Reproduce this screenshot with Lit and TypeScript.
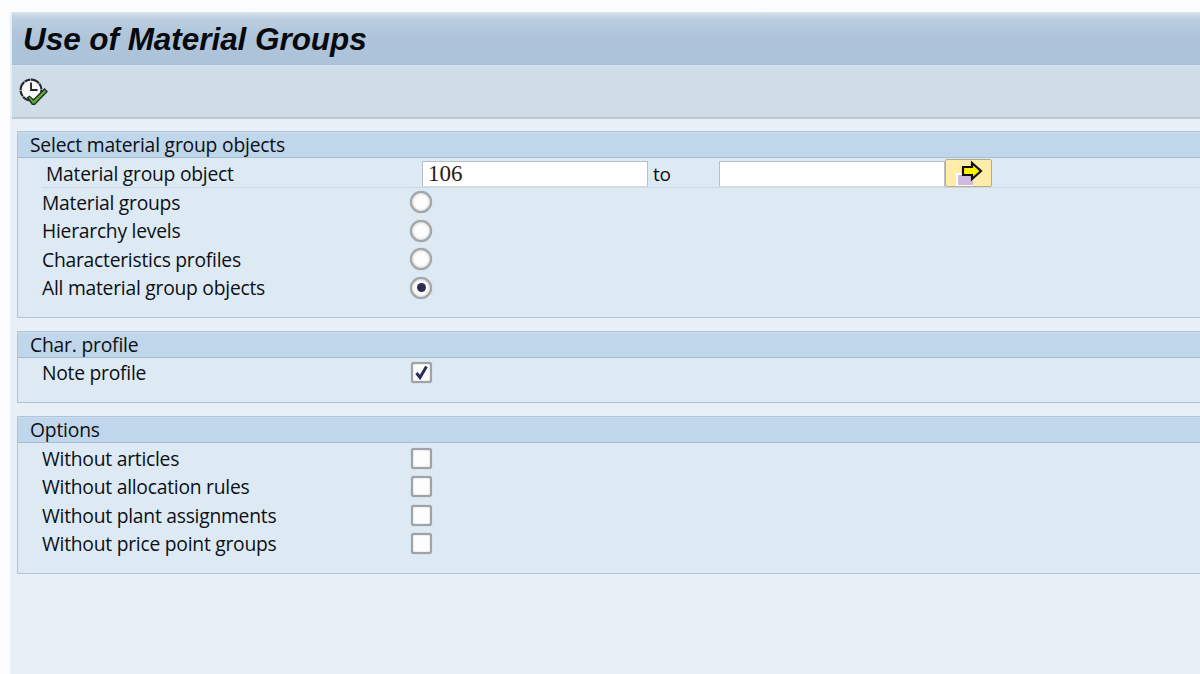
import { LitElement, html, css } from "lit";
import { customElement } from "lit/decorators.js";

const clock = html`<svg class="clock" width="30" height="30" viewBox="0 0 30 30">
  <circle cx="12" cy="13" r="10.4" fill="#f8f8fa" stroke="#24272c" stroke-width="2.1" stroke-dasharray="9 0.6 6 0.6"/>
  <path d="M12 5.5 V13 H18.5" fill="none" stroke="#1d2024" stroke-width="1.8"/>
  <path d="M7.5 20.5 L10.5 18.5 L14.5 22 L25.5 11 L29 14.5 L16 28 H13 Z" fill="#2a2e2a"/>
  <path d="M9.5 20.6 L10.6 20 L14.5 24 L25.6 13 L27 14.6 L15.5 26.4 H13.8 Z" fill="#58b42e"/>
</svg>`;

const arrow = html`<svg width="46" height="28" viewBox="0 0 46 28">
  <rect x="11" y="14" width="17" height="13" fill="#fff"/>
  <rect x="13" y="16" width="15" height="10" fill="#cfbcdc"/>
  <path d="M18 8 H27 V4 L36 12 L27 20 V16 H18 Z" fill="#fff200" stroke="#111" stroke-width="2.2"/>
</svg>`;

const radio = (on = false) => html`<span class="radio">${on ? html`<i></i>` : ""}</span>`;
const check = (on = false) => html`<span class="check">${on
  ? html`<svg width="15" height="15" viewBox="0 0 15 15"><path d="M2.5 8 L6 12.5 L12.5 1.5" fill="none" stroke="#2b2d5c" stroke-width="3"/></svg>`
  : ""}</span>`;

@customElement("app-root")
export class AppRoot extends LitElement {
  static styles = css`
    :host { display: block; width: 1200px; height: 674px; overflow: hidden; background: #fbfcfe;
      font-family: "Open Sans", "Noto Sans", sans-serif; color: #0c0f14; }
    .top { height: 12px; }
    .shell { margin-left: 10px; height: 662px; background: #e8eff7; }
    .title { margin-left: 2px; height: 53px; box-sizing: border-box; padding: 8px 0 0 11px;
      border-top: 1px solid #dfe3ea; border-bottom: 1px solid #a8bdd3;
      background: linear-gradient(#cfdfee 0, #bccfe0 6px, #aec4da 24px, #adc3da 100%);
      font: italic 700 31.5px/36px "Liberation Sans", sans-serif; color: #08090c; letter-spacing: -0.05px; }
    .toolbar { margin-left: 2px; height: 54px; box-sizing: border-box; padding: 11px 0 0 7px;
      background: #cfdde8; border-top: 1px solid #d9e5ef; border-bottom: 2px solid #b9cad9; }
    .clock { display: block; }
    .content { padding: 12px 0 0 7px; display: flex; flex-direction: column; gap: 13px; }
    .group { box-sizing: border-box; background: #ddeaf4; border: 1px solid #aec4da; border-right: 0; }
    .g1 { height: 187px; }
    .g2 { height: 72px; }
    .g3 { height: 158px; }
    .head { padding-left: 12px; background: #c0d6ea; border-bottom: 1px solid #a5bdd4;
      border-top: 1px solid #cfdcec; box-sizing: border-box; height: 26px; font-size: 19.3px; line-height: 24px; letter-spacing: -0.2px; }
    .row { display: flex; align-items: center; height: 28.5px; padding-left: 24px; font-size: 19.3px; white-space: nowrap; letter-spacing: -0.25px; }
    .label { width: 368px; flex: none; }
    .first { height: 30px; padding-left: 24px; align-items: flex-start; }
    .first .inner { display: flex; flex: 1; border-bottom: 1px solid #cbd8e3; height: 29px; }
    .first .label { width: 380px; padding-left: 4px; box-sizing: border-box; line-height: 31px; }
    .input { box-sizing: border-box; width: 226px; height: 26px; margin-top: 3px; background: #fff;
      border: 1px solid #b7bec6; border-bottom-color: #d5dde4; padding-left: 5px;
      font: 23px/23px "Liberation Serif", serif; color: #2a1a10; letter-spacing: 0; }
    .to { width: 71px; padding-left: 5px; box-sizing: border-box; line-height: 32px; font-size: 19px; }
    .btn { box-sizing: border-box; width: 47px; height: 28px; margin-top: 1px; border: 1px solid #b3ad8c;
      border-radius: 2px; background: #feeca8; display: block; overflow: hidden; }
    .btn svg { display: block; margin: -1px; }
    .radio { box-sizing: border-box; width: 22px; height: 22px; border-radius: 50%; background: #fdfdfd;
      border: 2px solid #a4a7aa; box-shadow: inset 0 0 3px #bbb, 0 0 1px #999; display: flex; align-items: center; justify-content: center; }
    .radio i { display: block; width: 9px; height: 9px; border-radius: 50%; background: #2b2d52; }
    .check { box-sizing: border-box; width: 21px; height: 21px; margin-left: 1px; border-radius: 3px; background: #fdfdfd;
      border: 2px solid #9fa3a7; box-shadow: inset 0 0 2px #ccc, 0 0 1px #999; display: flex; align-items: center; justify-content: center; }
    .g3 .head + .row { margin-top: 1px; }
  `;

  render() {
    const opts = ["Without articles", "Without allocation rules", "Without plant assignments", "Without price point groups"];
    return html`
      <div class="top"></div>
      <div class="shell">
        <div class="title">Use of Material Groups</div>
        <div class="toolbar">${clock}</div>
        <div class="content">
          <section class="group g1">
            <div class="head">Select material group objects</div>
            <div class="row first"><div class="inner">
              <span class="label">Material group object</span>
              <span class="input">106</span>
              <span class="to">to</span>
              <span class="input"></span>
              <span class="btn">${arrow}</span>
            </div></div>
            <div class="row"><span class="label">Material groups</span>${radio()}</div>
            <div class="row"><span class="label">Hierarchy levels</span>${radio()}</div>
            <div class="row"><span class="label">Characteristics profiles</span>${radio()}</div>
            <div class="row"><span class="label">All material group objects</span>${radio(true)}</div>
          </section>
          <section class="group g2">
            <div class="head">Char. profile</div>
            <div class="row"><span class="label">Note profile</span>${check(true)}</div>
          </section>
          <section class="group g3">
            <div class="head">Options</div>
            ${opts.map((o) => html`<div class="row"><span class="label">${o}</span>${check()}</div>`)}
          </section>
        </div>
      </div>
    `;
  }
}
